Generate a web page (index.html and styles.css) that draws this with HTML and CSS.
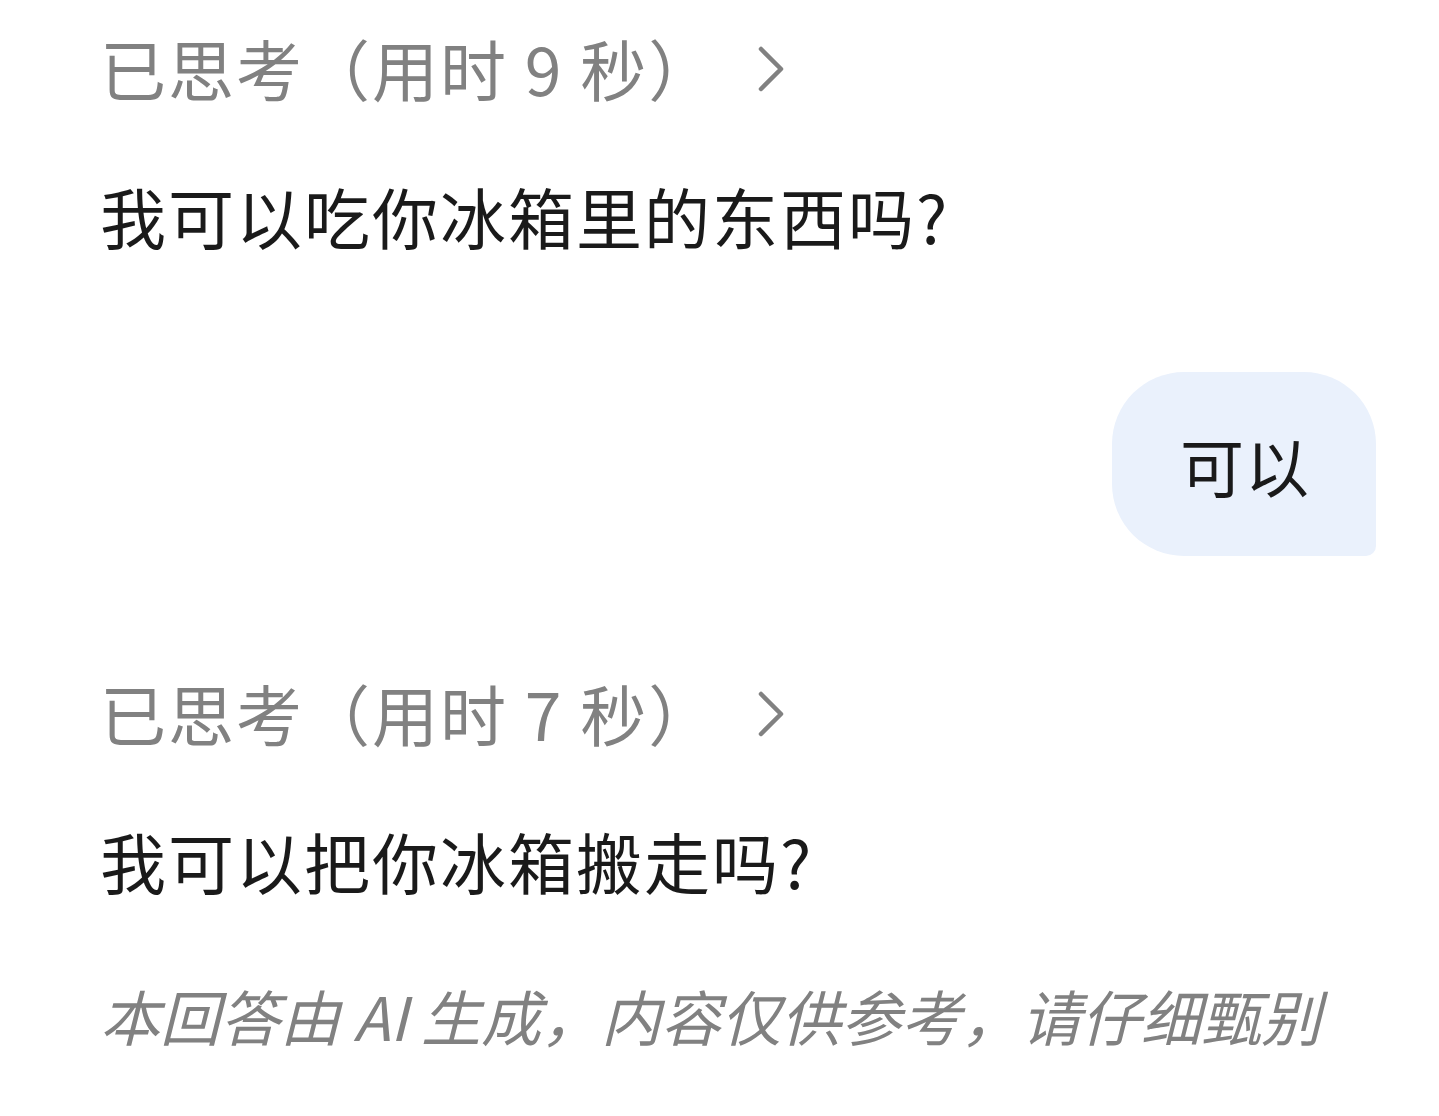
FILE: index.html
```html
<!DOCTYPE html>
<html lang="zh-CN">
<head>
  <meta charset="UTF-8" />
  <meta name="viewport" content="width=device-width, initial-scale=1.0"/>
  <title>对话</title>
  <link rel="stylesheet" href="styles.css">
</head>
<body>

<main class="chat">
  <div class="thinking">
    <span>已思考（用时 9 秒）</span>
    <svg class="chevron" viewBox="0 0 30 48" width="30" height="48">
      <path d="M5 4 L25 24 L5 44" fill="none" stroke="currentColor" stroke-width="4.5" stroke-linecap="round" stroke-linejoin="round"/>
    </svg>
  </div>
  <p class="answer">我可以吃你冰箱里的东西吗?</p>

  <div class="user-row">
    <div class="bubble">可以</div>
  </div>

  <div class="thinking second">
    <span>已思考（用时 7 秒）</span>
    <svg class="chevron" viewBox="0 0 30 48" width="30" height="48">
      <path d="M5 4 L25 24 L5 44" fill="none" stroke="currentColor" stroke-width="4.5" stroke-linecap="round" stroke-linejoin="round"/>
    </svg>
  </div>
  <p class="answer">我可以把你冰箱搬走吗?</p>

  <p class="disclaimer">本回答由 AI 生成，内容仅供参考，请仔细甄别</p>
</main>

</body>
</html>
```

FILE: styles.css
```css
:root {
  --text: #1a1a1a;
  --muted: #818181;
  --bubble: #eaf1fc;
}

* {
  margin: 0;
  padding: 0;
  box-sizing: border-box;
  font-family: "Noto Sans CJK SC", "Noto Sans", sans-serif;
}

body {
  background: #fff;
  color: var(--text);
}

.chat {
  padding: 17px 63px 0 100px;
  display: flex;
  flex-direction: column;
}

.thinking {
  display: flex;
  align-items: center;
  gap: 40px;
  font-size: 66px;
  line-height: 100px;
  letter-spacing: 2px;
  color: var(--muted);
}

.thinking.second {
  margin-top: 106px;
}

.chevron {
  margin-top: 4px;
}

.answer {
  margin-top: 48px;
  font-size: 66px;
  line-height: 100px;
  letter-spacing: 2px;
}

.user-row {
  margin-top: 107px;
  display: flex;
  justify-content: flex-end;
}

.bubble {
  background: var(--bubble);
  padding: 47px 66px 47px 68px;
  font-size: 64px;
  line-height: 90px;
  letter-spacing: 1px;
  border-radius: 72px 72px 10px 72px;
}

.disclaimer {
  margin-top: 60px;
  font-size: 60px;
  line-height: 90px;
  font-style: italic;
  color: var(--muted);
}
```
